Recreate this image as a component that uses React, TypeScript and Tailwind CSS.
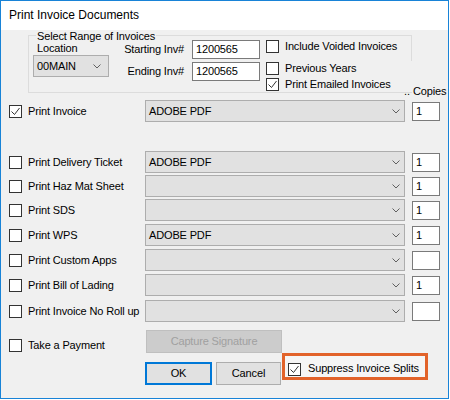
import React from "react";

const Chevron = () => (
  <svg width="8" height="5" viewBox="0 0 8 5" className="shrink-0">
    <polyline points="0.5,0.5 4,4 7.5,0.5" fill="none" stroke="#606060" strokeWidth="1" />
  </svg>
);

const Check = ({ checked = false }: { checked?: boolean }) => (
  <span className="flex h-[13px] w-[13px] shrink-0 items-center justify-center border border-[#333333] bg-white">
    {checked && (
      <svg width="11" height="11" viewBox="0 0 11 11">
        <polyline points="1.5,5.5 4.5,8.5 9.5,2" fill="none" stroke="#333333" strokeWidth="1" />
      </svg>
    )}
  </span>
);

const Combo = ({ value, className }: { value?: string; className: string }) => (
  <div className={`flex h-[22px] items-center justify-between border border-[#adadad] bg-[#e1e1e1] pl-[3px] ${className}`}>
    <span className="whitespace-nowrap">{value}</span>
    <Chevron />
  </div>
);

const TextBox = ({ value, className }: { value?: string; className: string }) => (
  <div className={`flex h-[19px] items-center border border-[#7a7a7a] bg-white pl-[3px] ${className}`}>{value}</div>
);

type Row = { label: string; printer?: string; copies?: string; gap: string };

const rows: Row[] = [
  { label: "Print Delivery Ticket", printer: "ADOBE PDF", copies: "1", gap: "mt-[29px]" },
  { label: "Print Haz Mat Sheet", copies: "1", gap: "mt-[2px]" },
  { label: "Print SDS", copies: "1", gap: "mt-[2px]" },
  { label: "Print WPS", printer: "ADOBE PDF", copies: "1", gap: "mt-[3px]" },
  { label: "Print Custom Apps", gap: "mt-[3px]" },
  { label: "Print Bill of Lading", copies: "1", gap: "mt-[3px]" },
  { label: "Print Invoice No Roll up", gap: "mt-[4px]" },
];

const DocRow = ({ label, printer, copies, checked, gap }: Row & { checked?: boolean }) => (
  <div className={`flex h-[22px] items-center ${gap}`}>
    <Check checked={checked} />
    <span className="w-[123px] whitespace-nowrap pl-[6px]">{label}</span>
    <Combo value={printer} className="w-[260px] pr-[4px]" />
    <TextBox value={copies} className="ml-[7px] w-[28px]" />
  </div>
);

export default function App() {
  return (
    <div className="h-[399px] w-[449px] border border-[#1883d7] bg-white font-['Liberation_Sans',Arial,sans-serif] text-[11px] leading-[13px] tracking-[-0.15px] text-black">
      {/* title bar */}
      <div className="flex h-[29px] items-center bg-white pl-[8px] text-[12px] tracking-normal">Print Invoice Documents</div>

      <div className="h-[368px] bg-[#f0f0f0]">
        {/* range selection + copies header */}
        <div className="flex h-[70px]">
          <div className="relative ml-[27px] mt-[5px] flex h-[58px] w-[384px] border border-[#dcdcdc]">
            <span className="absolute -top-[5px] left-[7px] bg-[#f0f0f0] px-[1px] leading-[10px]">
              Select Range of Invoices
            </span>
            <div className="ml-[4px] w-[76px] pt-[6px]">
              <div className="pl-[4px]">Location</div>
              <Combo value="00MAIN" className="w-[76px] pr-[7px]" />
            </div>
            <div className="flex flex-col gap-[3px] pt-[4px]">
              <div className="flex items-center">
                <span className="w-[76px] pr-[1px] text-right">Starting Inv#</span>
                <TextBox value="1200565" className="ml-[7px] w-[68px]" />
              </div>
              <div className="flex items-center">
                <span className="w-[76px] pr-[1px] text-right">Ending Inv#</span>
                <TextBox value="1200565" className="ml-[7px] w-[68px]" />
              </div>
            </div>
            <div className="ml-[6px] flex flex-col pt-[3px]">
              <label className="flex h-[16px] items-center gap-[6px] whitespace-nowrap">
                <Check />
                Include Voided Invoices
              </label>
              <label className="mt-[7px] flex h-[16px] w-[146px] items-center gap-[6px] whitespace-nowrap bg-[#f0f0f0]">
                <Check />
                Previous Years
              </label>
              <label className="flex h-[16px] w-[146px] items-center gap-[6px] whitespace-nowrap bg-[#f0f0f0]">
                <Check checked />
                Print Emailed Invoices
              </label>
            </div>
          </div>
          <div className="flex flex-col justify-end pb-[2px]">
            <div className="-ml-[8px] flex whitespace-nowrap">
              <span className="w-[9px]">..</span>
              <span>Copies</span>
            </div>
          </div>
        </div>

        {/* document rows */}
        <div className="pl-[8px]">
          <DocRow label="Print Invoice" printer="ADOBE PDF" copies="1" checked gap="mt-0" />
          {rows.map((r) => (
            <DocRow key={r.label} {...r} />
          ))}
        </div>

        {/* bottom actions */}
        <div className="mt-[8px] flex">
          <div className="w-[144px] pl-[8px]">
            <label className="mt-[9px] flex h-[13px] items-center gap-[6px] whitespace-nowrap">
              <Check />
              Take a Payment
            </label>
          </div>
          <div className="w-[137px]">
            <button className="ml-[1px] flex h-[23px] w-[136px] items-center justify-center border border-[#bfbfbf] bg-[#cccccc] text-[#a0a0a0]">
              Capture Signature
            </button>
            <div className="mt-[9px] flex">
              <button className="flex h-[23px] w-[67px] items-center justify-center border-2 border-[#0078d7] bg-[#e1e1e1]">
                OK
              </button>
              <button className="ml-[4px] flex h-[23px] w-[65px] items-center justify-center border border-[#adadad] bg-[#e1e1e1]">
                Cancel
              </button>
            </div>
          </div>
          <div className="mt-[23px] flex h-[27px] w-[146px] items-start border-[3px] border-[#e2632a] bg-[#f5f5f5] pl-[3px] pt-[7px]">
            <Check checked />
            <span className="ml-[7px] -mt-[1px] whitespace-nowrap">Suppress Invoice Splits</span>
          </div>
        </div>
      </div>
    </div>
  );
}
